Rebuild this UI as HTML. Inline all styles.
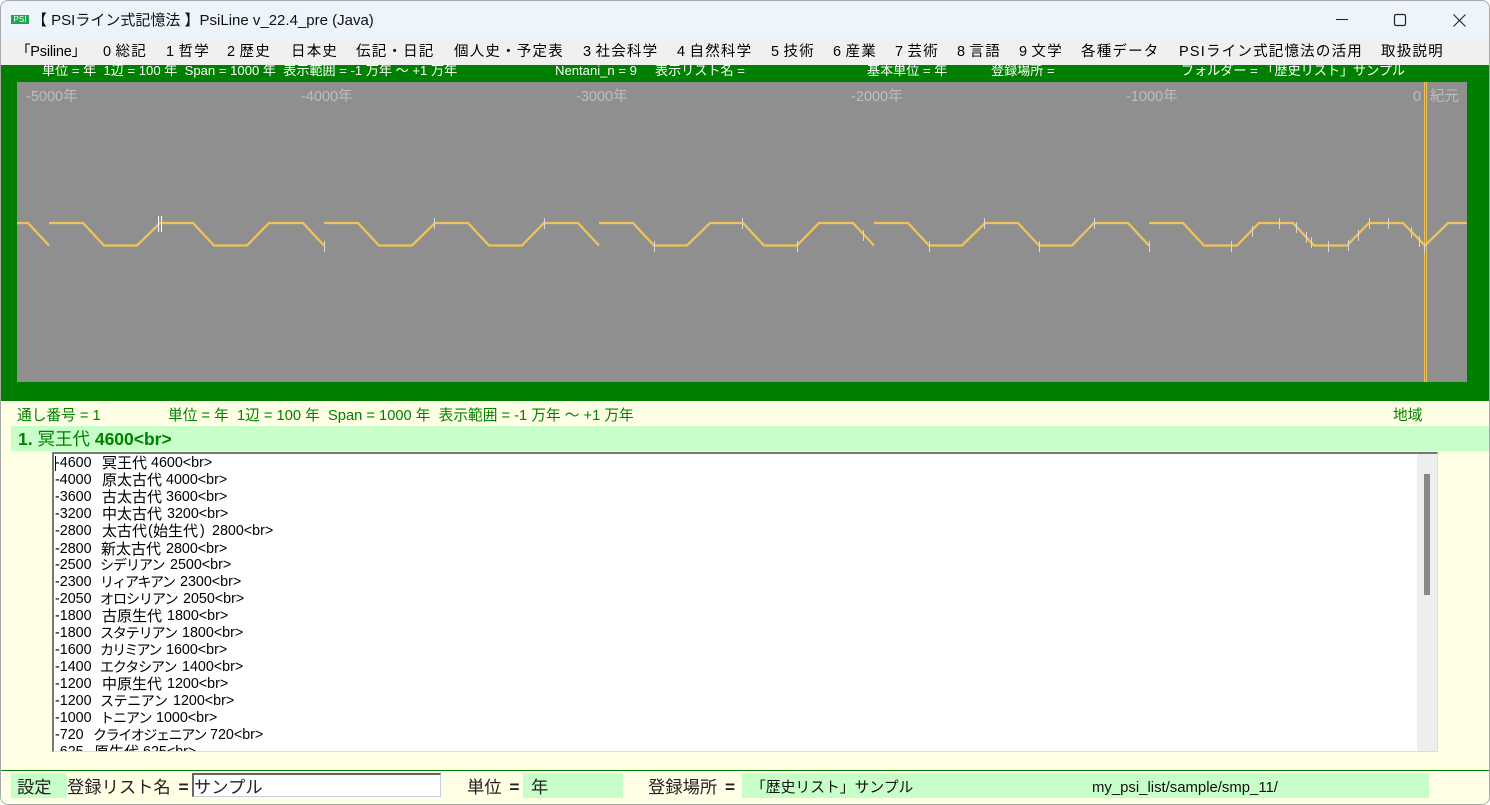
<!DOCTYPE html>
<html lang="ja"><head><meta charset="utf-8"><title>PsiLine</title>
<style>
html,body{margin:0;padding:0;background:#fff}
#w{position:relative;width:1490px;height:805px;overflow:hidden;font-family:"Liberation Sans","Noto Sans CJK JP",sans-serif;background:#ffffe6;border-radius:8px;box-sizing:border-box}
#w div{position:absolute;white-space:pre}
.m{top:42px;font-size:14.5px;letter-spacing:1.2px;word-spacing:-2px;line-height:20px;color:#000}
.g{top:64px;font-size:13.1px;line-height:14px;color:#fff}
.y{top:89px;font-size:14.5px;line-height:16px;color:#bdbdbd}
.s{top:408px;font-size:14.7px;line-height:16px;color:#008000}
.r{left:0;width:1360px;height:17px;font-size:14.3px;line-height:17px;color:#000}
.r span{position:absolute;top:0;white-space:pre}
.r .k{font-size:15px}
.r .a{font-size:14px}
.b{font-size:17.3px;line-height:22px;color:#222;top:776px}
.b b{margin-left:3px}
.gb{background:#c8ffc8;top:773px;height:25px}
</style></head><body><div id="w">
<div style="left:0;top:0;width:1490px;height:39px;background:#edf4fb;border-top:1px solid #bbb;box-sizing:border-box;border-radius:8px 8px 0 0"></div>
<div style="left:11px;top:15px;width:18px;height:9px;background:#22a352;color:#fff;font-size:8px;line-height:9px;text-align:center;letter-spacing:0">PSI</div>
<div style="left:32px;top:11px;font-size:15px;line-height:20px;color:#111">【 PSIライン式記憶法 】PsiLine v_22.4_pre (Java)</div>
<svg style="position:absolute;left:1335px;top:9px" width="140" height="20" fill="none" stroke="#222" stroke-width="1">
<path d="M1 10.500H13"/><rect x="59.500" y="5.500" width="11" height="11" rx="1.500" stroke-width="1.200"/><path d="M118.500 5.500L130.500 17.500M130.500 5.500L118.500 17.500" stroke-width="1.100"/></svg>
<div style="left:0;top:39px;width:1490px;height:26px;background:#f0f0f0"></div>
<div class="m" style="left:16px;letter-spacing:-.2px">「Psiline」</div><div class="m" style="left:103px">0 総記</div><div class="m" style="left:166px">1 哲学</div><div class="m" style="left:227px">2 歴史</div><div class="m" style="left:291px">日本史</div><div class="m" style="left:356px">伝記・日記</div><div class="m" style="left:454px">個人史・予定表</div><div class="m" style="left:583px">3 社会科学</div><div class="m" style="left:677px">4 自然科学</div><div class="m" style="left:771px">5 技術</div><div class="m" style="left:833px">6 産業</div><div class="m" style="left:895px">7 芸術</div><div class="m" style="left:957px">8 言語</div><div class="m" style="left:1019px">9 文学</div><div class="m" style="left:1081px">各種データ</div><div class="m" style="left:1179px">PSIライン式記憶法の活用</div><div class="m" style="left:1381px">取扱説明</div>
<div style="left:1px;top:65px;width:1488px;height:336px;background:#008000"></div>
<div class="g" style="left:42px">単位 = 年  1辺 = 100 年  Span = 1000 年  表示範囲 = -1 万年 ～ +1 万年</div>
<div class="g" style="left:555px">Nentani_n = 9</div><div class="g" style="left:655px">表示リスト名 =</div><div class="g" style="left:867px">基本単位 = 年</div><div class="g" style="left:991px">登録場所 =</div><div class="g" style="left:1181px">フォルダー = 「歴史リスト」サンプル</div>
<div style="left:17px;top:82px;width:1450px;height:300px;background:#8f8f8f"></div>
<div class="y" style="left:26px">-5000年</div><div class="y" style="left:301px">-4000年</div><div class="y" style="left:576px">-3000年</div><div class="y" style="left:851px">-2000年</div><div class="y" style="left:1126px">-1000年</div><div class="y" style="left:1413px">0</div><div class="y" style="left:1430px">紀元</div>
<svg style="position:absolute;left:0;top:0" width="1490" height="400" fill="none">
<g stroke="#f0c35a" stroke-width="2.300">
<path d="M17 223H28L49 245.500"/>
<path d="M49 223H83L104 245.500H137L160 223H193L214 245.500H247L269 223H303L324 245.500"/>
<path d="M324 223H358L379 245.500H412L435 223H468L489 245.500H522L544 223H578L599 245.500"/>
<path d="M599 223H633L654 245.500H687L710 223H743L764 245.500H797L819 223H853L874 245.500"/>
<path d="M874 223H908L929 245.500H962L985 223H1018L1039 245.500H1072L1094 223H1128L1149 245.500"/>
<path d="M1149 223H1183L1204 245.500H1237L1259 223H1293L1314 245.500H1347L1369 223H1403L1425 245.500L1448 223H1467"/>
</g>
<path d="M1424.500 82V382M1426.500 82V382" stroke="#f0c35a" stroke-width="1"/>
<path d="M158.500 216V232M161.500 216V232" stroke="#fff" stroke-width="1"/>
<path d="M324.500 241V252M434.500 218V229M544.500 218V229M654.500 241V252M742.500 218V229M797.500 241V252M863.500 230V241M929.500 241V252M984.500 218V229M1039.500 241V252M1094.500 218V229M1149.500 241V252M1231.500 241V252M1252.500 226V237M1279.500 218V229M1296.500 222V233M1306.500 232V243M1311.500 237V248M1328.500 241V252M1348.500 240V251M1358.500 230V241M1369.500 218V229M1388.500 218V229M1411.500 227V238M1419.500 236V247M1424.500 243V254" stroke="#d8d8d8" stroke-width="1"/>
</svg>
<div class="s" style="left:17px">通し番号 = 1</div><div class="s" style="left:168px">単位 = 年  1辺 = 100 年  Span = 1000 年  表示範囲 = -1 万年 ～ +1 万年</div><div class="s" style="left:1393px">地域</div>
<div style="left:11px;top:426px;width:1478px;height:25px;background:#c8ffc8"></div>
<div style="left:18px;top:429px;font-size:17.500px;line-height:20px;color:#008000;font-weight:bold">1. <span style="font-weight:normal">冥王代</span> 4600&lt;br&gt;</div>
<div style="left:52px;top:452px;width:1386px;height:300px;background:#fff;border-top:2px solid #777;border-left:2px solid #777;border-right:1px solid #ddd;border-bottom:1px solid #ddd;box-sizing:border-box;overflow:hidden">
<div class="r" style="top:1px"><span style="left:1px">-4600</span><span class="k" style="left:48px">冥王代</span><span style="left:97px">4600&lt;br&gt;</span></div>
<div class="r" style="top:18px"><span style="left:1px">-4000</span><span class="k" style="left:48px">原太古代</span><span style="left:112px">4000&lt;br&gt;</span></div>
<div class="r" style="top:35px"><span style="left:1px">-3600</span><span class="k" style="left:48px">古太古代</span><span style="left:112px">3600&lt;br&gt;</span></div>
<div class="r" style="top:52px"><span style="left:1px">-3200</span><span class="k" style="left:48px">中太古代</span><span style="left:113px">3200&lt;br&gt;</span></div>
<div class="r" style="top:69px"><span style="left:1px">-2800</span><span class="k" style="left:48px">太古代</span><span style="left:94px">(</span><span class="k" style="left:99px">始生代</span><span style="left:146px">)</span><span style="left:158px">2800&lt;br&gt;</span></div>
<div class="r" style="top:87px"><span style="left:1px">-2800</span><span class="k" style="left:47px">新太古代</span><span style="left:112px">2800&lt;br&gt;</span></div>
<div class="r" style="top:103px"><span style="left:1px">-2500</span><span class="a" style="left:46px;letter-spacing:-1px">シデリアン</span><span style="left:116px">2500&lt;br&gt;</span></div>
<div class="r" style="top:120px"><span style="left:1px">-2300</span><span class="a" style="left:46px;letter-spacing:-1.500px">リィアキアン</span><span style="left:126px">2300&lt;br&gt;</span></div>
<div class="r" style="top:137px"><span style="left:1px">-2050</span><span class="a" style="left:46px;letter-spacing:-1px">オロシリアン</span><span style="left:129px">2050&lt;br&gt;</span></div>
<div class="r" style="top:154px"><span style="left:1px">-1800</span><span class="k" style="left:48px">古原生代</span><span style="left:113px">1800&lt;br&gt;</span></div>
<div class="r" style="top:171px"><span style="left:1px">-1800</span><span class="a" style="left:46px;letter-spacing:-1.100px">スタテリアン</span><span style="left:128px">1800&lt;br&gt;</span></div>
<div class="r" style="top:188px"><span style="left:1px">-1600</span><span class="a" style="left:46px;letter-spacing:-1.800px">カリミアン</span><span style="left:112px">1600&lt;br&gt;</span></div>
<div class="r" style="top:205px"><span style="left:1px">-1400</span><span class="a" style="left:46px;letter-spacing:-1.100px">エクタシアン</span><span style="left:128px">1400&lt;br&gt;</span></div>
<div class="r" style="top:222px"><span style="left:1px">-1200</span><span class="k" style="left:48px">中原生代</span><span style="left:113px">1200&lt;br&gt;</span></div>
<div class="r" style="top:239px"><span style="left:1px">-1200</span><span class="a" style="left:46px;letter-spacing:-.400px">ステニアン</span><span style="left:119px">1200&lt;br&gt;</span></div>
<div class="r" style="top:256px"><span style="left:1px">-1000</span><span class="a" style="left:46px;letter-spacing:-1px">トニアン</span><span style="left:102px">1000&lt;br&gt;</span></div>
<div class="r" style="top:273px"><span style="left:1px">-720</span><span class="a" style="left:39px;letter-spacing:-1.400px">クライオジェニアン</span><span style="left:156px">720&lt;br&gt;</span></div>
<div class="r" style="top:290px"><span style="left:1px">-625</span><span class="k" style="left:40px">原生代</span><span style="left:89px">625&lt;br&gt;</span></div>
<div style="left:1363px;top:0;width:20px;height:298px;background:#eee"></div>
<div style="left:1370px;top:20px;width:6px;height:121px;background:#888"></div>
<div style="left:1px;top:2px;width:1px;height:15px;background:#000"></div>
</div>
<div style="left:1px;top:770px;width:1488px;height:1px;background:#008000"></div>
<div class="gb" style="left:11px;width:56px"></div>
<div class="b" style="left:17px">設定</div>
<div class="b" style="left:67px">登録リスト名 <b>=</b></div>
<div style="left:192px;top:773px;width:249px;height:24px;background:#fff;border-top:2px solid #666;border-left:2px solid #666;border-right:1px solid #ccd;border-bottom:1px solid #ccd;box-sizing:border-box"></div>
<div class="b" style="left:194px">サンプル</div>
<div class="b" style="left:467px">単位 <b>=</b></div>
<div class="gb" style="left:523px;width:100px"></div>
<div class="b" style="left:531px">年</div>
<div class="b" style="left:648px">登録場所 <b>=</b></div>
<div class="gb" style="left:742px;width:687px"></div>
<div style="left:751px;top:778px;font-size:14.800px;line-height:20px;color:#111">「歴史リスト」サンプル</div>
<div style="left:1092px;top:778px;font-size:14.900px;line-height:20px;color:#111">my_psi_list/sample/smp_11/</div>
<div style="left:0;top:0;width:1490px;height:805px;box-sizing:border-box;border:1px solid #a8a8a8;border-radius:8px"></div>
</div></body></html>
